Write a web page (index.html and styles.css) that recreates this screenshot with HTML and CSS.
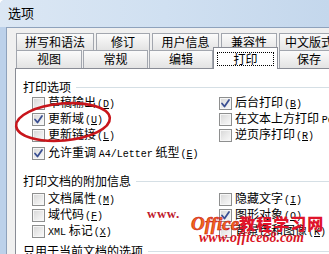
FILE: index.html
```html
<!DOCTYPE html>
<html lang="zh-CN">
<head>
<meta charset="utf-8">
<title>选项</title>
<link rel="stylesheet" href="styles.css">
</head>
<body>
<div class="window">
  <div class="titlebar">选项</div>
  <div class="frame">
    <div class="client">
      <div class="tabs">
        <div class="tabrow row1">
          <div class="tab w78">拼写和语法</div>
          <div class="tab w54">修订</div>
          <div class="tab w67">用户信息</div>
          <div class="tab w56">兼容性</div>
          <div class="tab w60">中文版式</div>
        </div>
        <div class="tabrow row2">
          <div class="tab w66">视图</div>
          <div class="tab w65">常规</div>
          <div class="tab w64 flush">编辑</div>
          <div class="tab sel"><span class="focus">打印</span></div>
          <div class="tab w60">保存</div>
        </div>
      </div>
      <div class="panel">
        <div class="legend">打印选项</div>
        <div class="cols">
          <div class="col">
            <div class="row"><span class="cb"></span><span class="lbl">草稿输出<span class="mn">(<u>D</u>)</span></span></div>
            <div class="row"><span class="cb on"><svg viewBox="0 0 11 11"><path d="M2 5.5 L4.5 8.5 L9 2"/></svg></span><span class="lbl">更新域<span class="mn">(<u>U</u>)</span></span></div>
            <div class="row"><span class="cb"></span><span class="lbl">更新链接<span class="mn">(<u>L</u>)</span></span></div>
          </div>
          <div class="col right">
            <div class="row"><span class="cb on"><svg viewBox="0 0 11 11"><path d="M2 5.5 L4.5 8.5 L9 2"/></svg></span><span class="lbl">后台打印<span class="mn">(<u>B</u>)</span></span></div>
            <div class="row"><span class="cb"></span><span class="lbl">在文本上方打印 <span class="lat">PostScript</span><span class="mn">(<u>S</u>)</span></span></div>
            <div class="row"><span class="cb"></span><span class="lbl">逆页序打印<span class="mn">(<u>R</u>)</span></span></div>
          </div>
        </div>
        <div class="row full"><span class="cb on"><svg viewBox="0 0 11 11"><path d="M2 5.5 L4.5 8.5 L9 2"/></svg></span><span class="lbl">允许重调 <span class="lat">A4/Letter</span> 纸型<span class="mn">(<u>E</u>)</span></span></div>

        <div class="legend g2">打印文档的附加信息</div>
        <div class="cols g2rows">
          <div class="col">
            <div class="row"><span class="cb"></span><span class="lbl">文档属性<span class="mn">(<u>M</u>)</span></span></div>
            <div class="row"><span class="cb"></span><span class="lbl">域代码<span class="mn">(<u>F</u>)</span></span></div>
            <div class="row"><span class="cb"></span><span class="lbl"><span class="lat">XML</span> 标记<span class="mn">(<u>X</u>)</span></span></div>
          </div>
          <div class="col right">
            <div class="row"><span class="cb"></span><span class="lbl">隐藏文字<span class="mn">(<u>I</u>)</span></span></div>
            <div class="row"><span class="cb on"><svg viewBox="0 0 11 11"><path d="M2 5.5 L4.5 8.5 L9 2"/></svg></span><span class="lbl">图形对象<span class="mn">(<u>O</u>)</span></span></div>
            <div class="row"><span class="cb"></span><span class="lbl">背景色和图像<span class="mn">(<u>K</u>)</span></span></div>
          </div>
        </div>

        <div class="legend g3">只用于当前文档的选项</div>
      </div>
    </div>
  </div>

  <svg class="mark" width="329" height="254" viewBox="0 0 329 254">
    <ellipse cx="63" cy="122" rx="47" ry="18.5" transform="rotate(-5 63 122)"/>
  </svg>

  <div class="wm-www">www.</div>
  <div class="wm-title"><span class="wm-office">Office</span><span class="wm-cn">教程学习网</span></div>
  <div class="wm-url">www.office68.com</div>
</div>
</body>
</html>
```

FILE: styles.css
```css
html, body {
  margin: 0;
  padding: 0;
  background: #ffffff;
}

body {
  font-family: "Noto Sans CJK SC", "Noto Sans", sans-serif;
  font-size: 12px;
  color: #000;
}

.window {
  width: 329px;
  height: 254px;
  position: relative;
  overflow: hidden;
  display: flex;
  flex-direction: column;
  background: #c3d6ec;
  border-top-left-radius: 5px;
}

.titlebar {
  flex: none;
  height: 27px;
  box-sizing: border-box;
  padding: 5px 0 0 8px;
  line-height: 16px;
  font-size: 13px;
  background: linear-gradient(to right, #dbe7f4 0%, #d0e0f1 50%, #c4d7ec 100%);
}

.frame {
  flex: 1;
  min-height: 0;
  display: flex;
  border-left: 6px solid #bcd1ea;
}

.client {
  flex: 1;
  min-width: 0;
  display: flex;
  flex-direction: column;
  background: #f0f0f0;
  border-left: 1px solid #8ea2bc;
  border-top: 1px solid #8ea2bc;
  padding: 5px 0 0 8px;
}

.tabs {
  flex: none;
  margin-left: 1px;
}

.tabrow {
  display: flex;
  white-space: nowrap;
}

.tab {
  flex: none;
  box-sizing: border-box;
  height: 17px;
  border: 1px solid #a2a6ae;
  border-bottom: none;
  background: linear-gradient(#fbfbfb, #e3e3e3);
  text-align: center;
  line-height: 15px;
  overflow: hidden;
}

.row1 .tab {
  margin-right: 2px;
}

.row2 .tab {
  height: 18px;
  line-height: 16px;
  margin-right: 1px;
}

.row2 .tab.flush {
  margin-right: 0;
}

.w54 { width: 54px; }
.w56 { width: 56px; }
.w60 { width: 60px; }
.w64 { width: 64px; }
.w65 { width: 65px; }
.w66 { width: 66px; }
.w67 { width: 67px; }
.w78 { width: 78px; }

.row2 .tab.sel {
  width: 65px;
  height: 22px;
  margin-top: -3px;
  margin-bottom: -1px;
  margin-right: 1px;
  background: #ffffff;
  border-color: #898c95;
  position: relative;
  z-index: 1;
  line-height: 12px;
}

.focus {
  display: block;
  height: 14px;
  box-sizing: border-box;
  margin: 4px 3px 0;
  border: 1px dotted #000;
  line-height: 12px;
}

.panel {
  flex: 1;
  background: #ffffff;
  border: 1px solid #898c95;
  border-right: none;
  border-bottom: none;
  padding: 10px 0 0 7px;
  white-space: nowrap;
}

.legend {
  display: flex;
  align-items: center;
  height: 16px;
  line-height: 16px;
}

.legend::after {
  content: "";
  flex: 1;
  height: 1px;
  margin-left: 5px;
  background: #d5dfe5;
}

.legend.g2 {
  margin-top: 12px;
}

.legend.g3 {
  margin-top: 4px;
}

.cols {
  display: flex;
}

.g2rows {
  margin-top: 2px;
}

.col {
  width: 187px;
  flex: none;
}

.col.right {
  flex: 1;
  width: auto;
  min-width: 0;
}

.row {
  height: 16px;
  display: flex;
  align-items: center;
  padding-left: 9px;
  white-space: nowrap;
}

.row.full {
  margin-top: 2px;
}

.lbl {
  white-space: pre;
  line-height: 16px;
}

.cb {
  flex: none;
  width: 13px;
  height: 13px;
  box-sizing: border-box;
  margin-right: 3px;
  border: 1px solid #8e8f8f;
  box-shadow: inset 0 0 0 1px #f6f6f6;
  background: linear-gradient(135deg, #d6d6d6 0%, #ebebeb 55%, #fafafa 100%);
  display: flex;
  align-items: center;
  justify-content: center;
}

.cb svg {
  width: 11px;
  height: 11px;
}

.cb svg path {
  fill: none;
  stroke: #3a4f92;
  stroke-width: 1.8;
  stroke-linecap: round;
  stroke-linejoin: round;
}

.mn {
  font-family: "Liberation Mono", "DejaVu Sans Mono", monospace;
  font-size: 10px;
  margin-left: 1px;
}

.lat {
  font-family: "Liberation Mono", "DejaVu Sans Mono", monospace;
  font-size: 10px;
}

.mark {
  position: absolute;
  left: 0;
  top: 0;
  pointer-events: none;
}

.mark ellipse {
  fill: none;
  stroke: #c8161c;
  stroke-width: 2.6;
}

.wm-www {
  position: absolute;
  left: 147px;
  top: 206px;
  font-family: "Liberation Serif", serif;
  font-weight: bold;
  font-size: 13px;
  line-height: 16px;
  color: #c0182a;
  letter-spacing: 0.5px;
}

.wm-title {
  position: absolute;
  left: 191px;
  top: 213px;
  display: flex;
  align-items: baseline;
  line-height: 20px;
}

.wm-office {
  font-family: "Liberation Serif", serif;
  font-style: italic;
  font-weight: bold;
  font-size: 19px;
  color: #f46a14;
  -webkit-text-stroke: 0.6px #c8141c;
}

.wm-cn {
  font-family: "Noto Sans CJK SC", sans-serif;
  font-weight: 900;
  font-size: 16px;
  color: #e0142a;
  letter-spacing: 1px;
}

.wm-url {
  position: absolute;
  left: 199px;
  top: 230px;
  font-family: "Liberation Serif", serif;
  font-style: italic;
  font-weight: bold;
  font-size: 14px;
  line-height: 16px;
  color: #d8141e;
}
```
